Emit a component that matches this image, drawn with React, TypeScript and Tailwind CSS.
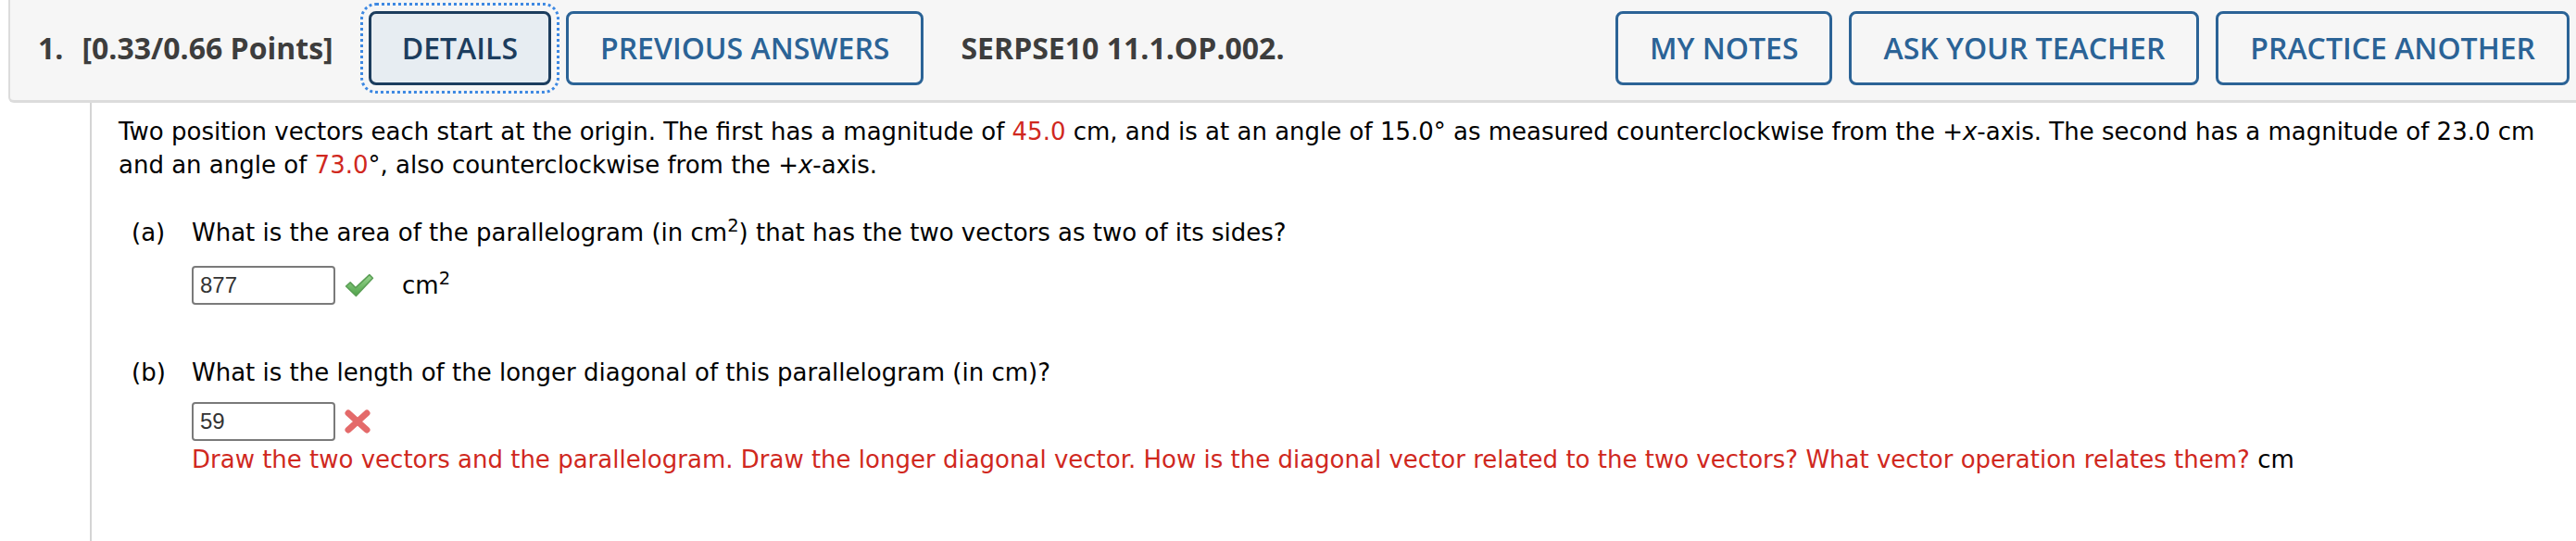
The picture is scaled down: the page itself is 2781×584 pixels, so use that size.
import React from "react";

function HeaderButton({ label, active }: { label: string; active?: boolean }) {
    if (active) {
        return (
            <button className="h-[80px] px-[33px] border-[3px] border-[#1c3d5e] rounded-[8px] bg-[#e7edf2] text-[#1c3d5e] text-[32px] font-semibold outline-3 outline-dotted outline-[#3d88e2] outline-offset-[6px]">
                {label}
            </button>
        );
    }
    return (
        <button className="h-[80px] px-[34px] border-[3px] border-[#2b6396] rounded-[8px] bg-transparent text-[#2b6396] text-[32px] font-semibold">
            {label}
        </button>
    );
}

function CheckIcon() {
    return (
        <svg width="32" height="26" viewBox="0 0 31 25">
            <defs>
                <linearGradient id="chk" x1="0" y1="0" x2="0" y2="1">
                    <stop offset="0" stopColor="#9ad68f" />
                    <stop offset="1" stopColor="#4fa34a" />
                </linearGradient>
            </defs>
            <path d="M1.5 13.5 L6 9.5 L11.5 15 L26 1.5 L29.5 5 L12 23.5 Z" fill="url(#chk)" stroke="#5a9e55" strokeWidth="1.5" strokeLinejoin="round" />
        </svg>
    );
}

function CrossIcon() {
    return (
        <svg width="28" height="26" viewBox="0 0 28 26">
            <path d="M4 4 L24 22 M24 4 L4 22" stroke="#e46a6a" strokeWidth="7" strokeLinecap="round" />
        </svg>
    );
}

function AnswerBox({ value }: { value: string }) {
    return (
        <div className="w-[155px] h-[42px] border-2 border-[#7a7a7a] rounded-[4px] bg-white flex items-center px-[7px] font-['Liberation_Sans',Arial,sans-serif] text-[24px] text-[#333]">
            {value}
        </div>
    );
}

export default function App() {
    return (
        <div className="w-[2781px] h-[584px] overflow-hidden bg-white flex flex-col">
            {/* question header */}
            <div className="ml-[9px] h-[111px] shrink-0 bg-[#f6f6f6] border-l-2 border-b-[3px] border-[#dcdcdc] rounded-bl-[6px] flex items-center pl-[30px] pr-[7px] pb-[5px] font-['Open_Sans',sans-serif]">
                <div className="text-[32px] font-bold text-[#3d3d3d] whitespace-nowrap">
                    <span className="mr-[20px]">1.</span>[0.33/0.66 Points]
                </div>
                <div className="flex items-center gap-[16px] ml-[38px]">
                    <HeaderButton label="DETAILS" active />
                    <HeaderButton label="PREVIOUS ANSWERS" />
                </div>
                <div className="ml-[40px] text-[32px] font-bold text-[#3d3d3d] whitespace-nowrap">SERPSE10 11.1.OP.002.</div>
                <div className="flex-1" />
                <div className="flex items-center gap-[18px]">
                    <HeaderButton label="MY NOTES" />
                    <HeaderButton label="ASK YOUR TEACHER" />
                    <HeaderButton label="PRACTICE ANOTHER" />
                </div>
            </div>

            {/* question body */}
            <div className="flex-1 ml-[97px] border-l-2 border-[#d4d4d4] pl-[29px] pr-[12px] pt-[13px] font-['DejaVu_Sans',Verdana,sans-serif] text-[26px] leading-[36px] text-black">
                <p>
                    Two position vectors each start at the origin. The first has a magnitude of <span className="text-[#d0281e]">45.0</span> cm, and is at an angle of 15.0° as measured counterclockwise from the +<i>x</i>-axis. The second has a magnitude of 23.0 cm and an angle of <span className="text-[#d0281e]">73.0</span>°, also counterclockwise from the +<i>x</i>-axis.
                </p>

                <div className="mt-[37px] pl-[14px] flex">
                    <span className="w-[65px] shrink-0">(a)</span>
                    <span>What is the area of the parallelogram (in cm<sup>2</sup>) that has the two vectors as two of its sides?</span>
                </div>
                <div className="mt-[18px] pl-[79px] flex items-center">
                    <AnswerBox value="877" />
                    <span className="ml-[10px] flex items-center"><CheckIcon /></span>
                    <span className="ml-[30px]">cm<sup>2</sup></span>
                </div>

                <div className="mt-[55px] pl-[14px] flex">
                    <span className="w-[65px] shrink-0">(b)</span>
                    <span>What is the length of the longer diagonal of this parallelogram (in cm)?</span>
                </div>
                <div className="mt-[14px] pl-[79px] flex items-center">
                    <AnswerBox value="59" />
                    <span className="ml-[10px] flex items-center"><CrossIcon /></span>
                </div>
                <div className="mt-[2px] pl-[79px]">
                    <span className="text-[#d0281e]">Draw the two vectors and the parallelogram. Draw the longer diagonal vector. How is the diagonal vector related to the two vectors? What vector operation relates them?</span> cm
                </div>
            </div>
        </div>
    );
}
